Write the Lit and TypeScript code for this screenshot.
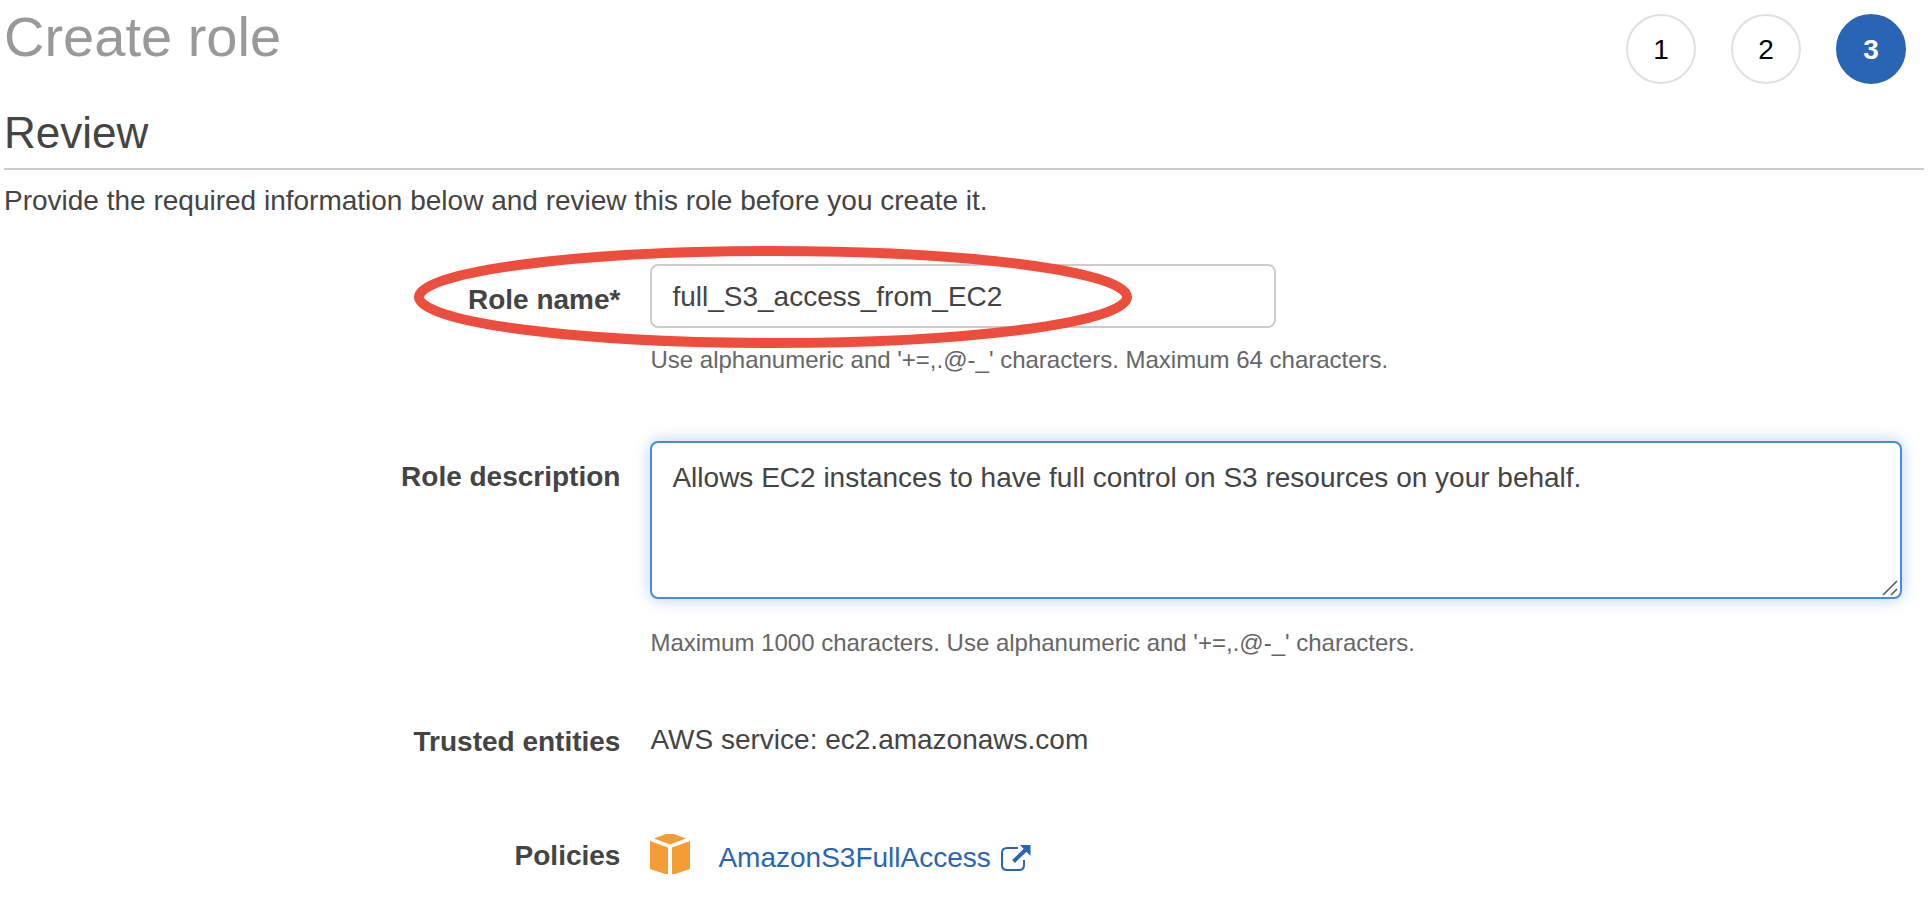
import { LitElement, html, css } from "lit";
import { customElement, property, state } from "lit/decorators.js";
import { classMap } from "lit/directives/class-map.js";

@customElement("wizard-steps")
class WizardSteps extends LitElement {
  @property({ type: Number }) current = 1;
  @property({ type: Number }) total = 3;

  static styles = css`
    :host {
      display: block;
    }
    .steps {
      display: flex;
      gap: 35px;
      margin: 0;
      padding: 0;
      list-style: none;
    }
    .step {
      box-sizing: border-box;
      display: block;
      width: 70px;
      height: 70px;
      padding: 2px 0 0;
      border: 2px solid #e0e0e0;
      border-radius: 50%;
      background: #fff;
      color: #000;
      font: inherit;
      font-size: 28px;
      text-align: center;
    }
    .step.active {
      border-color: #2a65b5;
      background: #2a65b5;
      color: #fff;
      font-weight: 700;
    }
  `;

  render() {
    const steps = Array.from({ length: this.total }, (_, i) => i + 1);
    return html`
      <ol class="steps">
        ${steps.map(
          (n) => html`<li>
            <button
              type="button"
              class=${classMap({ step: true, active: n === this.current })}
              aria-current=${n === this.current ? "step" : "false"}
            >${n}</button>
          </li>`
        )}
      </ol>
    `;
  }
}

@customElement("app-root")
class AppRoot extends LitElement {
  @state() private roleName = "full_S3_access_from_EC2";
  @state() private description =
    "Allows EC2 instances to have full control on S3 resources on your behalf.";

  static styles = css`
    :host {
      display: block;
      padding: 0 6px 0 4px;
      background: #fff;
      color: #444;
      font-family: "Liberation Sans", Helvetica, Arial, sans-serif;
      font-size: 28px;
      line-height: 36px;
    }
    .header {
      display: flex;
      justify-content: space-between;
      align-items: flex-start;
      padding-right: 18px;
    }
    .steps {
      padding-top: 14px;
    }
    .title {
      margin: 0;
      padding-top: 4px;
      color: #999;
      font-size: 56px;
      font-weight: 400;
      line-height: 66px;
    }
    .section {
      margin: 0;
      padding: 25px 0 11px;
      border-bottom: 2px solid #ccc;
      font-size: 44px;
      font-weight: 400;
      line-height: 48px;
    }
    .intro {
      margin: 0;
      padding: 13px 0 45px;
    }
    .form {
      display: grid;
      grid-template-columns: 33fr 67fr;
      column-gap: 30px;
      padding-right: 22px;
    }
    .label {
      padding-top: 2px;
      font-weight: 700;
      text-align: right;
    }
    .label.top {
      padding-top: 18px;
    }
    .label.beside-icon {
      padding-top: 4px;
    }
    .name-row {
      grid-column: 1 / -1;
      display: grid;
      grid-template-columns: subgrid;
      position: relative;
    }
    .control {
      box-sizing: border-box;
      display: block;
      margin: 0;
      padding: 14px 20px 12px;
      border: 2px solid #ccc;
      border-radius: 8px;
      outline: none;
      background: #fff;
      color: inherit;
      font: inherit;
    }
    .name {
      width: 50%;
      height: 64px;
    }
    .description-box {
      position: relative;
    }
    .description {
      width: 100%;
      height: 158px;
      padding: 17px 20px;
      border-color: #4a89dc;
      box-shadow: 0 0 16px rgba(74, 137, 220, 0.4);
      resize: vertical;
    }
    .description::-webkit-resizer {
      background: transparent;
    }
    .grip {
      position: absolute;
      right: 4px;
      bottom: 3px;
      width: 16px;
      height: 16px;
      pointer-events: none;
    }
    .hint {
      margin: 0;
      color: #666;
      font-size: 24px;
      line-height: 28px;
    }
    .name-hint {
      padding: 18px 0 67px;
    }
    .description-hint {
      padding: 30px 0 65px;
    }
    .value {
      padding-bottom: 76px;
    }
    .policy {
      display: flex;
      align-items: flex-start;
      gap: 28px;
    }
    .box {
      flex: none;
      width: 40px;
      height: 40px;
    }
    .link {
      display: inline-flex;
      align-items: center;
      gap: 10px;
      padding-top: 6px;
      color: #2a65b5;
      text-decoration: none;
    }
    .external {
      width: 30px;
      height: 30px;
    }
    .mark {
      position: absolute;
      left: 410px;
      top: -18px;
      width: 718px;
      height: 102px;
      pointer-events: none;
    }
  `;

  render() {
    return html`
      <header class="header">
        <h1 class="title">Create role</h1>
        <wizard-steps class="steps" current="3" total="3"></wizard-steps>
      </header>
      <h2 class="section">Review</h2>
      <p class="intro">
        Provide the required information below and review this role before you create it.
      </p>
      <form class="form">
        <div class="name-row">
          <label class="label top" for="name">Role name*</label>
          <div>
            <input
              id="name"
              class="control name"
              type="text"
              maxlength="64"
              aria-describedby="name-hint"
              spellcheck="false"
              .value=${this.roleName}
              @input=${(e: Event) => (this.roleName = (e.target as HTMLInputElement).value)}
            />
            <p id="name-hint" class="hint name-hint">
              Use alphanumeric and '+=,.@-_' characters. Maximum 64 characters.
            </p>
          </div>
          <svg class="mark" viewBox="0 0 718 102" aria-hidden="true">
            <ellipse cx="359" cy="51" rx="354" ry="46" fill="none" stroke="#ed4d3d" stroke-width="10" />
          </svg>
        </div>

        <label class="label top" for="description">Role description</label>
        <div>
          <div class="description-box">
            <textarea
              id="description"
              class="control description"
              maxlength="1000"
              aria-describedby="description-hint"
              spellcheck="false"
              .value=${this.description}
              @input=${(e: Event) => (this.description = (e.target as HTMLTextAreaElement).value)}
            ></textarea>
            <svg class="grip" viewBox="0 0 16 16" aria-hidden="true">
              <path d="M1 15L15 1M9 15L15 9" fill="none" stroke="#555" stroke-width="1.500" />
            </svg>
          </div>
          <p id="description-hint" class="hint description-hint">
            Maximum 1000 characters. Use alphanumeric and '+=,.@-_' characters.
          </p>
        </div>

        <div class="label">Trusted entities</div>
        <div class="value">AWS service: ec2.amazonaws.com</div>

        <div class="label beside-icon">Policies</div>
        <div class="policy">
          <svg class="box" viewBox="0 0 40 40" fill="#f49d37" aria-hidden="true">
            <path d="M16 0H24L36 4.500L20 10.500L4 4.500Z" />
            <path d="M0 7L18 13.500V40H15L0 35Z" />
            <path d="M40 7L22 13.500V40H25L40 35Z" />
          </svg>
          <a class="link" href="#AmazonS3FullAccess">
            <span>AmazonS3FullAccess</span>
            <svg class="external" viewBox="0 0 30 30" fill="none" aria-hidden="true">
              <path
                d="M17 5H6Q1 5 1 10V22Q1 27 6 27H18Q23 27 23 22V17"
                stroke="currentColor"
                stroke-width="2"
              />
              <path d="M12.500 18.500L25 6.500" stroke="currentColor" stroke-width="4" />
              <path d="M19 2H29.500V13Z" fill="currentColor" />
            </svg>
          </a>
        </div>
      </form>
    `;
  }
}
